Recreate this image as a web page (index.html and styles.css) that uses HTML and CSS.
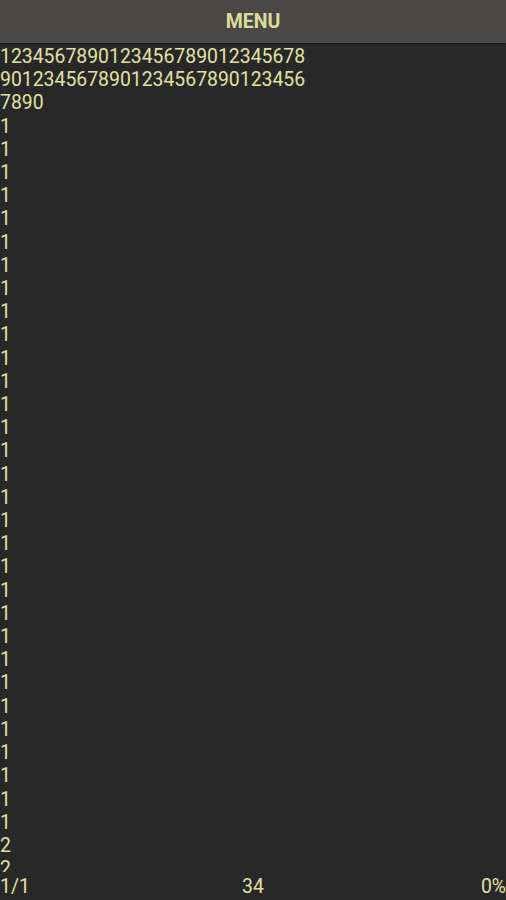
FILE: index.html
```html
<!DOCTYPE html>
<html lang="en">
<head>
    <meta charset="UTF-8">
    <meta name="viewport" content="width=device-width, initial-scale=1.0">
    <title>Reader</title>
    <link rel="stylesheet" href="styles.css">
</head>
<body>
<div class="screen">
    <header class="menu-bar">MENU</header>
    <div class="page">
        <div class="line">1234567890123456789012345678</div>
        <div class="line">9012345678901234567890123456</div>
        <div class="line">7890</div>
        <div class="line">1</div>
        <div class="line">1</div>
        <div class="line">1</div>
        <div class="line">1</div>
        <div class="line">1</div>
        <div class="line">1</div>
        <div class="line">1</div>
        <div class="line">1</div>
        <div class="line">1</div>
        <div class="line">1</div>
        <div class="line">1</div>
        <div class="line">1</div>
        <div class="line">1</div>
        <div class="line">1</div>
        <div class="line">1</div>
        <div class="line">1</div>
        <div class="line">1</div>
        <div class="line">1</div>
        <div class="line">1</div>
        <div class="line">1</div>
        <div class="line">1</div>
        <div class="line">1</div>
        <div class="line">1</div>
        <div class="line">1</div>
        <div class="line">1</div>
        <div class="line">1</div>
        <div class="line">1</div>
        <div class="line">1</div>
        <div class="line">1</div>
        <div class="line">1</div>
        <div class="line">1</div>
        <div class="line">2</div>
        <div class="line">2</div>
    </div>
    <footer class="status">
        <span class="pos">1/1</span>
        <span class="count">34</span>
        <span class="pct">0%</span>
    </footer>
</div>
</body>
</html>
```

FILE: styles.css
```css
html, body { margin: 0; padding: 0; background: #282828; }
body { font-family: Roboto, "Noto Sans", sans-serif; color: #e2e1a4; }
.screen { width: 506px; height: 900px; display: flex; flex-direction: column; overflow: hidden; }
.menu-bar {
    height: 43px; flex: none; background: #4a4847;
    display: flex; align-items: center; justify-content: center;
    font-size: 19.5px; font-weight: bold; color: #dddc9c;
    box-shadow: 0 1px 2px rgba(0,0,0,0.5);
}
.page { flex: 1; min-height: 0; overflow: hidden; padding-top: 2px; font-size: 19.4px; line-height: 23.2px; }
.line { white-space: pre; }
.status {
    height: 28px; flex: none; background: #282828;
    display: flex; align-items: center; justify-content: space-between;
    font-size: 19.4px; padding-top: 1px; box-sizing: border-box;
}
.status span { flex: 1; }
.status .count { text-align: center; }
.status .pct { text-align: right; }
```
